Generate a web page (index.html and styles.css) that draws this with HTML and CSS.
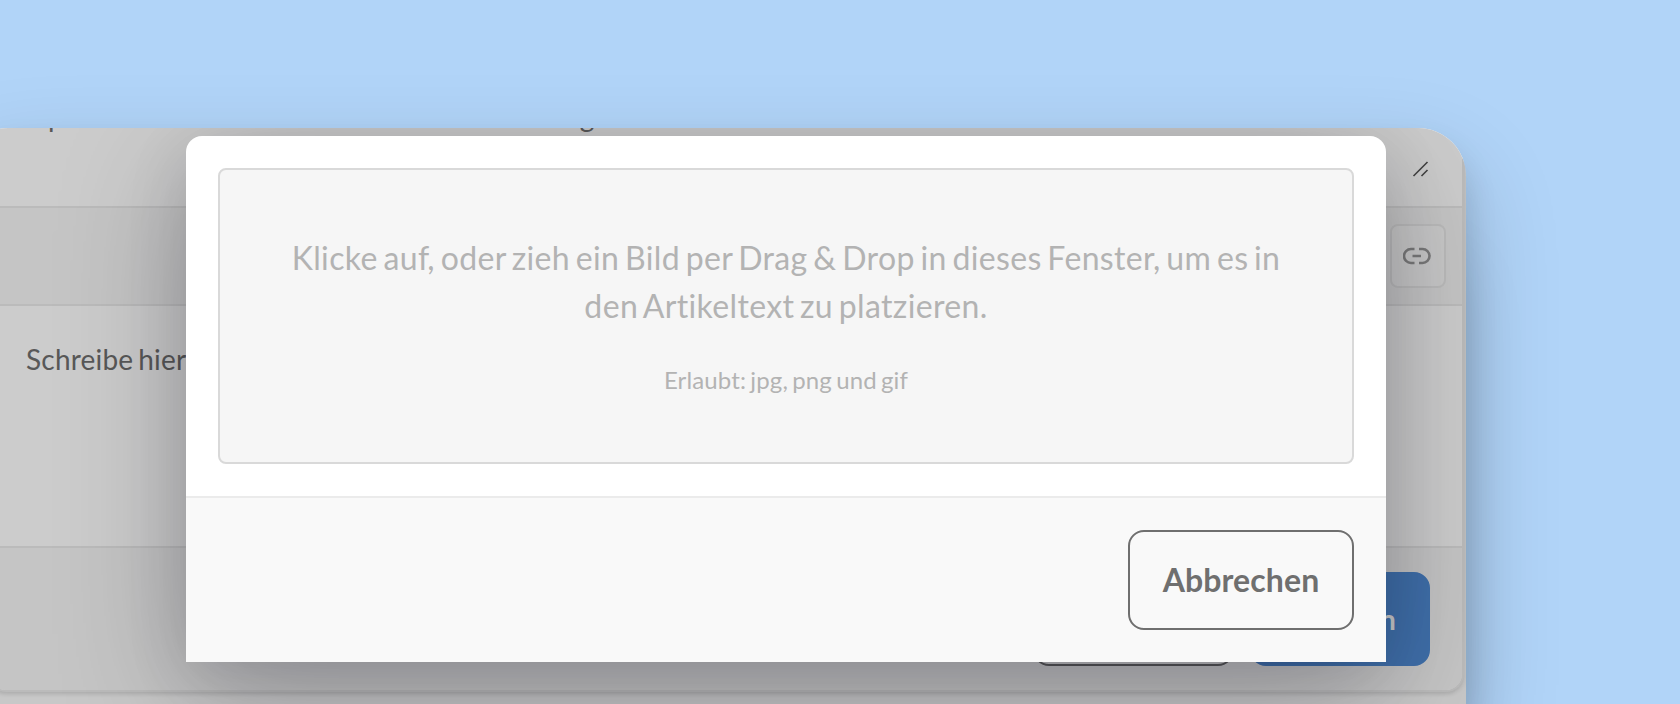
FILE: index.html
```html
<!DOCTYPE html>
<html lang="de">
<head>
<meta charset="utf-8">
<title>Bild einfügen</title>
<link rel="stylesheet" href="styles.css">
</head>
<body>
<main class="window">
  <section class="editor">
    <div class="teaser">
      <span class="teaser-text"><span>p</span><span>g</span></span>
      <svg class="resize" width="18" height="18" viewBox="0 0 18 18"><path d="M1.5 16 15.5 2M9.5 16l6-6"/></svg>
    </div>
    <div class="toolbar">
      <button class="tool" aria-label="Link">
        <svg width="28" height="18" viewBox="0 0 28 18"><path d="M11.500 2H8a7 7 0 0 0 0 14h3.500M16 2h3.500a7 7 0 0 1 0 14H16M9.500 9h8.500"/></svg>
      </button>
    </div>
    <div class="text">Schreibe hier</div>
    <div class="actions">
      <button class="btn-cancel">Abbrechen</button>
      <button class="btn-save">Speichern</button>
    </div>
  </section>
  <div class="overlay">
    <div class="modal">
      <div class="modal-body">
        <div class="dropzone">
          <p class="hint">Klicke au<span class="kern">f</span>, oder zieh ein Bild per Drag &amp; Drop in dieses Fenste<span class="kern">r</span>, um es in den Artikeltext zu platzieren.</p>
          <p class="formats">Erlaubt: jpg, png und gif</p>
        </div>
      </div>
      <div class="modal-footer">
        <button class="modal-cancel">Abbrechen</button>
      </div>
    </div>
  </div>
</main>
</body>
</html>
```
FILE: styles.css
```css
* { box-sizing: border-box; }
html { overflow: hidden; }
body {
  margin: 0;
  height: 704px;
  padding-top: 128px;
  overflow: hidden;
  background: #b1d4f8;
  font-family: Lato, sans-serif;
  font-variant-ligatures: none;
}
button { margin: 0; padding: 0; font: inherit; letter-spacing: .1px; }
p { margin: 0; }
.window {
  position: relative;
  width: 1506px;
  height: 576px;
  margin-left: -40px;
  overflow: hidden;
  border-radius: 48px 48px 0 0;
  background: #fafafa;
  box-shadow: 0 20px 32px rgba(0, 0, 0, .13), 0 40px 96px rgba(0, 0, 0, .2), 0 128px 64px rgba(0, 0, 0, .1);
}
.editor {
  width: 1476px;
  height: 564px;
  margin-left: 28px;
  overflow: hidden;
  border: 2px solid #eaeaea;
  border-top: 0;
  border-radius: 0 0 18px 18px;
  background: #fff;
  box-shadow: 0 2px 4px rgba(0, 0, 0, .14);
}
.teaser {
  display: flex;
  justify-content: space-between;
  height: 80px;
  padding: 0 32px 0 58px;
  border-bottom: 2px solid #eaeaea;
}
.teaser-text {
  display: flex;
  gap: 516px;
  margin-top: -29px;
  font-size: 28px;
  line-height: 34px;
  color: #6f6f6f;
}
.resize { margin-top: 32px; fill: none; stroke: #555; stroke-width: 1.6; }
.toolbar {
  display: flex;
  align-items: center;
  justify-content: flex-end;
  height: 98px;
  padding-right: 16px;
  border-bottom: 2px solid #eaeaea;
  background: #f7f7f7;
}
.tool {
  display: flex;
  align-items: center;
  justify-content: center;
  width: 56px;
  height: 64px;
  border: 2px solid #eaeaea;
  border-radius: 8px;
  background: #fbfbfb;
}
.tool svg { margin-right: 2px; fill: none; stroke: #999; stroke-width: 2.6; }
.text {
  height: 242px;
  padding: 32px 36px;
  border-bottom: 2px solid #eaeaea;
  font-size: 28px;
  line-height: 42px;
  letter-spacing: .2px;
  word-spacing: -2.4px;
  color: #6f6f6f;
}
.actions {
  display: flex;
  justify-content: flex-end;
  gap: 16px;
  height: 142px;
  padding: 24px 32px;
  background: #f7f7f7;
}
.btn-cancel, .btn-save {
  height: 94px;
  border: 2px solid #6f6f6f;
  border-radius: 16px;
  background: none;
  font-size: 28px;
  font-weight: 700;
  color: #6f6f6f;
}
.btn-cancel { width: 201px; }
.btn-save {
  width: 180px;
  padding-right: 32px;
  border-color: #508cd6;
  background: #508cd6;
  text-align: right;
  color: #fff;
}
.overlay {
  position: absolute;
  inset: 0;
  padding: 8px 0 0 226px;
  background: rgba(0, 0, 0, .2);
}
.modal {
  width: 1200px;
  border-radius: 16px 16px 0 0;
  background: #fff;
  box-shadow: 0 16px 64px rgba(0, 0, 20, .1), 0 32px 128px rgba(0, 0, 20, .27);
}
.modal-body { padding: 32px; }
.dropzone {
  height: 296px;
  padding: 64px;
  border: 2px solid #d9d9d9;
  border-radius: 8px;
  background: #f6f6f6;
  text-align: center;
  color: #b3b3b3;
}
.hint {
  font-size: 32px;
  line-height: 48px;
  letter-spacing: .35px;
  word-spacing: -2.8px;
}
.kern { letter-spacing: -1.8px; }
.formats {
  margin-top: 32px;
  font-size: 24px;
  line-height: 36px;
  letter-spacing: .14px;
  word-spacing: -2.1px;
}
.modal-footer {
  display: flex;
  justify-content: flex-end;
  height: 166px;
  padding: 32px;
  border-top: 2px solid #ebebeb;
  background: #f9f9f9;
}
.modal-cancel {
  width: 226px;
  height: 100px;
  padding-bottom: 2px;
  border: 2px solid #6f6f6f;
  border-radius: 16px;
  background: none;
  font-size: 32px;
  font-weight: 700;
  color: #6f6f6f;
}
```
